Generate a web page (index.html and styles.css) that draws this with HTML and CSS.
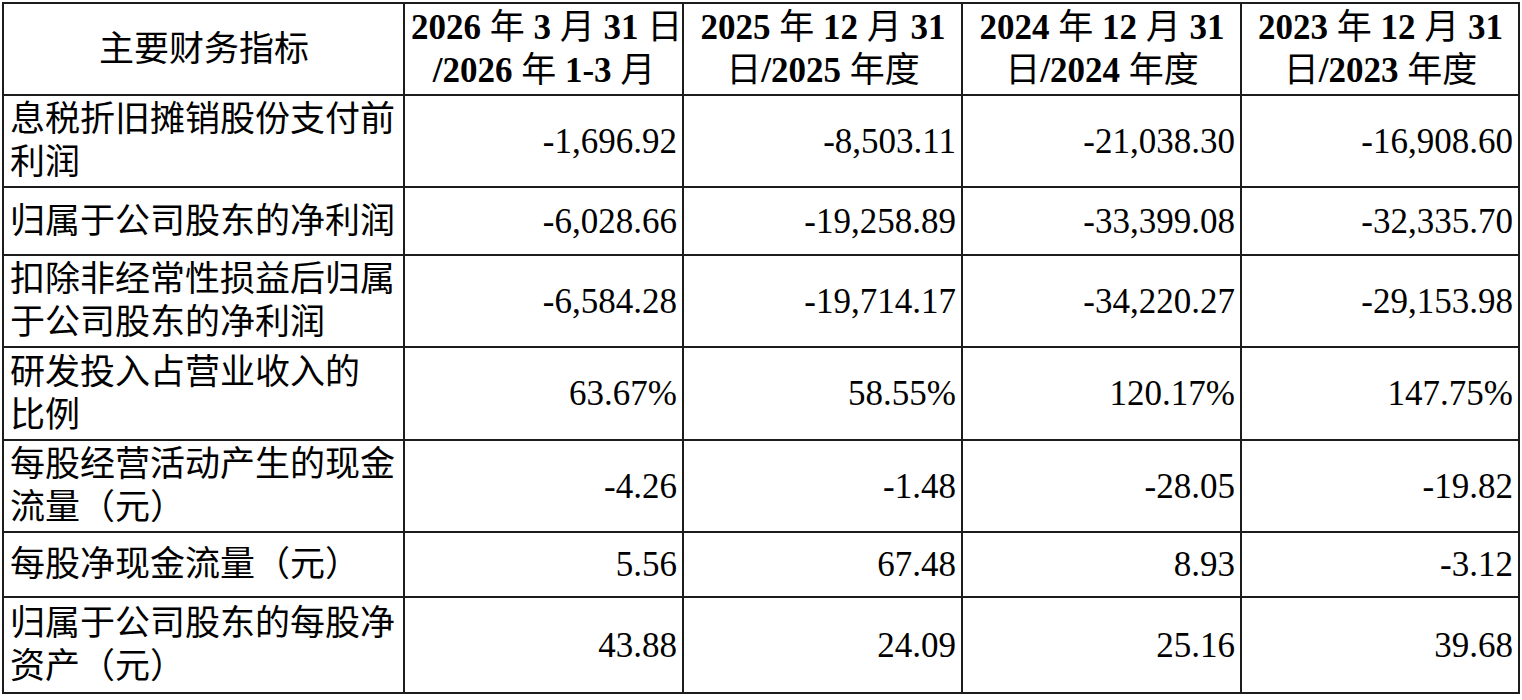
FILE: index.html
```html
<!DOCTYPE html>
<html lang="zh-CN">
<head>
<meta charset="utf-8">
<title>主要财务指标</title>
<link rel="stylesheet" href="styles.css">
</head>
<body>
<table class="fin">
  <colgroup>
    <col class="c-label">
    <col class="c-val">
    <col class="c-val">
    <col class="c-val">
    <col class="c-last">
  </colgroup>
  <thead>
    <tr class="r-head">
      <th class="h-label"><span class="cjk">主要财务指标</span></th>
      <th>2026 <span class="cjk">年</span> 3 <span class="cjk">月</span> 31 <span class="cjk">日</span><br>/2026 <span class="cjk">年</span> 1-3 <span class="cjk">月</span></th>
      <th>2025 <span class="cjk">年</span> 12 <span class="cjk">月</span> 31<br><span class="cjk">日</span>/2025 <span class="cjk">年度</span></th>
      <th>2024 <span class="cjk">年</span> 12 <span class="cjk">月</span> 31<br><span class="cjk">日</span>/2024 <span class="cjk">年度</span></th>
      <th>2023 <span class="cjk">年</span> 12 <span class="cjk">月</span> 31<br><span class="cjk">日</span>/2023 <span class="cjk">年度</span></th>
    </tr>
  </thead>
  <tbody>
    <tr class="r1">
      <td class="label">息税折旧摊销股份支付前<br>利润</td>
      <td class="num">-1,696.92</td>
      <td class="num">-8,503.11</td>
      <td class="num">-21,038.30</td>
      <td class="num">-16,908.60</td>
    </tr>
    <tr class="r2">
      <td class="label">归属于公司股东的净利润</td>
      <td class="num">-6,028.66</td>
      <td class="num">-19,258.89</td>
      <td class="num">-33,399.08</td>
      <td class="num">-32,335.70</td>
    </tr>
    <tr class="r3">
      <td class="label">扣除非经常性损益后归属<br>于公司股东的净利润</td>
      <td class="num">-6,584.28</td>
      <td class="num">-19,714.17</td>
      <td class="num">-34,220.27</td>
      <td class="num">-29,153.98</td>
    </tr>
    <tr class="r4">
      <td class="label">研发投入占营业收入的<br>比例</td>
      <td class="num">63.67%</td>
      <td class="num">58.55%</td>
      <td class="num">120.17%</td>
      <td class="num">147.75%</td>
    </tr>
    <tr class="r5">
      <td class="label">每股经营活动产生的现金<br>流量（元）</td>
      <td class="num">-4.26</td>
      <td class="num">-1.48</td>
      <td class="num">-28.05</td>
      <td class="num">-19.82</td>
    </tr>
    <tr class="r6">
      <td class="label">每股净现金流量（元）</td>
      <td class="num">5.56</td>
      <td class="num">67.48</td>
      <td class="num">8.93</td>
      <td class="num">-3.12</td>
    </tr>
    <tr class="r7">
      <td class="label">归属于公司股东的每股净<br>资产（元）</td>
      <td class="num">43.88</td>
      <td class="num">24.09</td>
      <td class="num">25.16</td>
      <td class="num">39.68</td>
    </tr>
  </tbody>
</table>
</body>
</html>
```

FILE: styles.css
```css
html, body {
  margin: 0;
  padding: 0;
  background: #ffffff;
}

body {
  font-family: "Liberation Serif", "Noto Sans CJK SC", serif;
  color: #000000;
}

.fin {
  border-collapse: collapse;
  table-layout: fixed;
  width: 1516px;
  margin: 2px 0 0 2px;
  font-size: 35px;
  line-height: 43px;
}

.c-label { width: 401px; }
.c-val { width: 279px; }
.c-last { width: 278px; }

.fin th,
.fin td {
  border: 2px solid #1c1c1c;
  padding: 0 5px 0 6px;
  vertical-align: middle;
  overflow: hidden;
  white-space: nowrap;
}

.fin th {
  font-weight: bold;
  text-align: center;
}

.fin th .cjk {
  font-weight: normal;
}

.h-label {
  font-weight: normal;
}

.label {
  text-align: left;
  padding-left: 6px;
}

.num {
  text-align: right;
  padding-right: 5px;
}

.r-head { height: 92px; }
.r1 { height: 92px; }
.r2 { height: 68px; }
.r3 { height: 92px; }
.r4 { height: 93px; }
.r5 { height: 92px; }
.r6 { height: 65px; }
.r7 { height: 96px; }
```
